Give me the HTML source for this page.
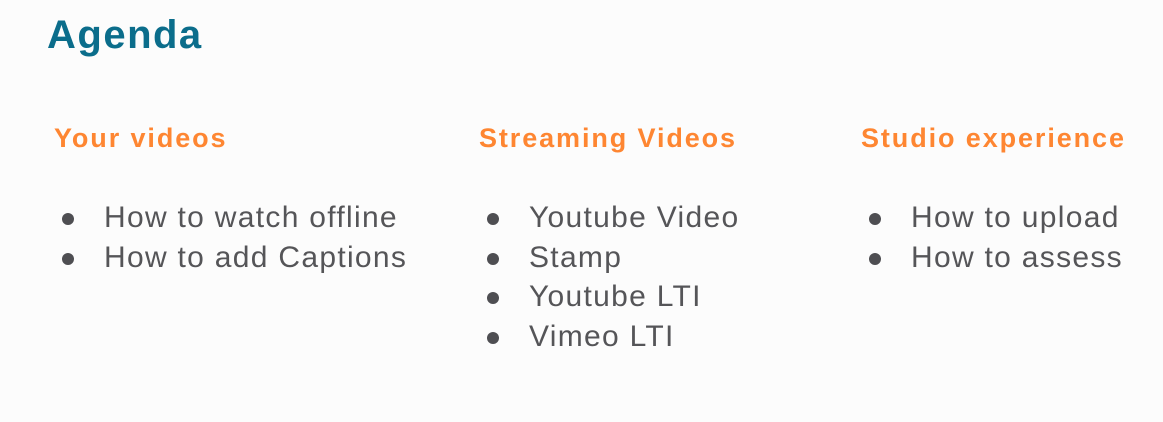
<!DOCTYPE html>
<html><head><style>
body{margin:0;width:1163px;height:422px;background:#fcfcfc;position:relative;overflow:hidden;font-family:"Liberation Sans",sans-serif}
.t{position:absolute;left:47px;top:12px;font-size:40px;font-weight:bold;color:#0b6d8b;line-height:46px;letter-spacing:1.5px}
.h{position:absolute;top:121px;font-size:27px;font-weight:bold;color:#fe8632;line-height:34px;letter-spacing:1.9px}
.l{position:absolute;top:198px;margin:0;padding:0;list-style:none;font-size:30px;color:#555558;line-height:39.5px;letter-spacing:1.3px}
.l li{position:relative;padding-left:50px;white-space:nowrap}
.l li:before{content:"";position:absolute;left:8px;top:15px;width:12px;height:12px;border-radius:50%;background:#4e4e52}
</style></head><body>
<div class="t">Agenda</div>
<div class="h" style="left:54px">Your videos</div>
<div class="h" style="left:479px">Streaming Videos</div>
<div class="h" style="left:861px">Studio experience</div>
<ul class="l" style="left:54px"><li>How to watch offline</li><li>How to add Captions</li></ul>
<ul class="l" style="left:479px"><li>Youtube Video</li><li>Stamp</li><li>Youtube LTI</li><li>Vimeo LTI</li></ul>
<ul class="l" style="left:861px"><li>How to upload</li><li>How to assess</li></ul>
</body></html>
